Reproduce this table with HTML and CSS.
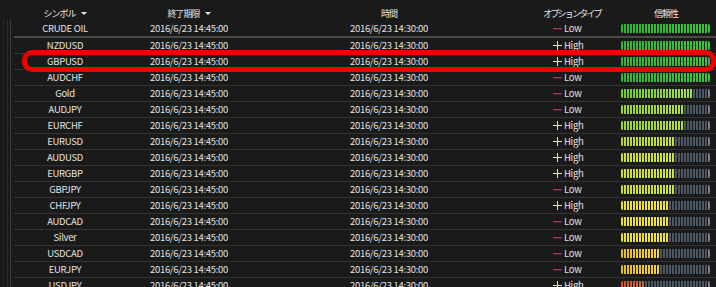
FILE: index.html
```html
<!DOCTYPE html>
<html lang="ja">
<head>
<meta charset="utf-8">
<title>信頼性</title>
<link rel="stylesheet" href="styles.css">
</head>
<body>
<div class="screen">
  <div class="rails"></div>
  <div class="table">
    <div class="head">
      <div class="hc">シンボル<span class="sort"></span></div>
      <div class="hc">終了期限<span class="sort"></span></div>
      <div class="hc">時間</div>
      <div class="hc hc-type">オプションタイプ</div>
      <div class="hc">信頼性</div>
    </div>

    <div class="row row-first"><div class="c">CRUDE OIL</div><div class="c">2016/6/23 14:45:00</div><div class="c">2016/6/23 14:30:00</div><div class="t"><span class="ico low"></span>Low</div><div class="b"><div class="bar"><div class="fill lv1" style="width:90px"></div></div></div></div>
    <div class="row"><div class="c">NZDUSD</div><div class="c">2016/6/23 14:45:00</div><div class="c">2016/6/23 14:30:00</div><div class="t"><span class="ico high"></span>High</div><div class="b"><div class="bar"><div class="fill lv1" style="width:90px"></div></div></div></div>
    <div class="row"><div class="c">GBPUSD</div><div class="c">2016/6/23 14:45:00</div><div class="c">2016/6/23 14:30:00</div><div class="t"><span class="ico high"></span>High</div><div class="b"><div class="bar"><div class="fill lv1" style="width:87px"></div></div></div></div>
    <div class="row"><div class="c">AUDCHF</div><div class="c">2016/6/23 14:45:00</div><div class="c">2016/6/23 14:30:00</div><div class="t"><span class="ico low"></span>Low</div><div class="b"><div class="bar"><div class="fill lv1" style="width:90px"></div></div></div></div>
    <div class="row"><div class="c">Gold</div><div class="c">2016/6/23 14:45:00</div><div class="c">2016/6/23 14:30:00</div><div class="t"><span class="ico low"></span>Low</div><div class="b"><div class="bar"><div class="fill lv2" style="width:72px"></div></div></div></div>
    <div class="row"><div class="c">AUDJPY</div><div class="c">2016/6/23 14:45:00</div><div class="c">2016/6/23 14:30:00</div><div class="t"><span class="ico low"></span>Low</div><div class="b"><div class="bar"><div class="fill lv3" style="width:63px"></div></div></div></div>
    <div class="row"><div class="c">EURCHF</div><div class="c">2016/6/23 14:45:00</div><div class="c">2016/6/23 14:30:00</div><div class="t"><span class="ico high"></span>High</div><div class="b"><div class="bar"><div class="fill lv3" style="width:63px"></div></div></div></div>
    <div class="row"><div class="c">EURUSD</div><div class="c">2016/6/23 14:45:00</div><div class="c">2016/6/23 14:30:00</div><div class="t"><span class="ico high"></span>High</div><div class="b"><div class="bar"><div class="fill lv4" style="width:54px"></div></div></div></div>
    <div class="row"><div class="c">AUDUSD</div><div class="c">2016/6/23 14:45:00</div><div class="c">2016/6/23 14:30:00</div><div class="t"><span class="ico high"></span>High</div><div class="b"><div class="bar"><div class="fill lv5" style="width:54px"></div></div></div></div>
    <div class="row"><div class="c">EURGBP</div><div class="c">2016/6/23 14:45:00</div><div class="c">2016/6/23 14:30:00</div><div class="t"><span class="ico high"></span>High</div><div class="b"><div class="bar"><div class="fill lv5" style="width:54px"></div></div></div></div>
    <div class="row"><div class="c">GBPJPY</div><div class="c">2016/6/23 14:45:00</div><div class="c">2016/6/23 14:30:00</div><div class="t"><span class="ico low"></span>Low</div><div class="b"><div class="bar"><div class="fill lv5" style="width:54px"></div></div></div></div>
    <div class="row"><div class="c">CHFJPY</div><div class="c">2016/6/23 14:45:00</div><div class="c">2016/6/23 14:30:00</div><div class="t"><span class="ico high"></span>High</div><div class="b"><div class="bar"><div class="fill lv6" style="width:48px"></div></div></div></div>
    <div class="row"><div class="c">AUDCAD</div><div class="c">2016/6/23 14:45:00</div><div class="c">2016/6/23 14:30:00</div><div class="t"><span class="ico low"></span>Low</div><div class="b"><div class="bar"><div class="fill lv6" style="width:48px"></div></div></div></div>
    <div class="row"><div class="c">Silver</div><div class="c">2016/6/23 14:45:00</div><div class="c">2016/6/23 14:30:00</div><div class="t"><span class="ico low"></span>Low</div><div class="b"><div class="bar"><div class="fill lv6" style="width:48px"></div></div></div></div>
    <div class="row"><div class="c">USDCAD</div><div class="c">2016/6/23 14:45:00</div><div class="c">2016/6/23 14:30:00</div><div class="t"><span class="ico low"></span>Low</div><div class="b"><div class="bar"><div class="fill lv7" style="width:39px"></div></div></div></div>
    <div class="row"><div class="c">EURJPY</div><div class="c">2016/6/23 14:45:00</div><div class="c">2016/6/23 14:30:00</div><div class="t"><span class="ico low"></span>Low</div><div class="b"><div class="bar"><div class="fill lv7" style="width:39px"></div></div></div></div>
    <div class="row"><div class="c">USDJPY</div><div class="c">2016/6/23 14:45:00</div><div class="c">2016/6/23 14:30:00</div><div class="t"><span class="ico high"></span>High</div><div class="b"><div class="bar"><div class="fill lv8" style="width:24px"></div></div></div></div>
  </div>
  <div class="focus"></div>
</div>
</body>
</html>
```

FILE: styles.css
```css
html, body {
  margin: 0;
  padding: 0;
  background: #1a1a1a;
}

.screen {
  position: relative;
  display: flex;
  align-items: flex-start;
  width: 716px;
  height: 287px;
  overflow: hidden;
  background: #1a1a1a;
  font-family: "Noto Sans CJK JP", "Noto Sans", sans-serif;
  font-size: 9.5px;
  letter-spacing: -0.3px;
  color: #e2e2e2;
}

.rails {
  flex: none;
  align-self: stretch;
  width: 14px;
  margin-top: 19px;
  background: linear-gradient(to right,
    transparent 0 3px, #262626 3px 4px,
    transparent 4px 7px, #2b2b2b 7px 8px,
    transparent 8px 10px, #3c3c3c 10px 11px,
    transparent 11px);
}

.table {
  flex: 1;
  display: flex;
  flex-direction: column;
}

.head,
.row {
  flex: none;
  display: grid;
  grid-template-columns: 102px 146px 254px 100px 100px;
}

.head {
  height: 21px;
  box-sizing: border-box;
  padding-top: 6px;
}

.hc {
  display: flex;
  justify-content: center;
  align-items: center;
  height: 14px;
  font-size: 9px;
  letter-spacing: -1px;
  color: #e8e8e8;
}

.hc-type {
  padding-left: 12px;
  letter-spacing: -1.8px;
}

.sort {
  width: 0;
  height: 0;
  margin-left: 5px;
  border-left: 3px solid transparent;
  border-right: 3px solid transparent;
  border-top: 3px solid #e8e8e8;
}

.row {
  height: 16px;
  box-sizing: border-box;
  border-bottom: 1px solid #343434;
  align-items: center;
}

.row-first {
  border-bottom: 2px solid #4a4a4a;
  height: 17px;
}

.c {
  text-align: center;
  white-space: nowrap;
  line-height: 15px;
}

.t {
  display: flex;
  align-items: center;
  padding-left: 37px;
  line-height: 15px;
}

.ico {
  position: relative;
  width: 10px;
  height: 9px;
  margin-right: 1px;
}

.ico.low::before {
  content: "";
  position: absolute;
  left: 0;
  right: 1px;
  top: 4px;
  height: 1px;
  background: #b03a4a;
  box-shadow: 0 0.5px 0 #7a2530;
}

.ico.high::before,
.ico.high::after {
  content: "";
  position: absolute;
  background: #ece4a8;
}

.ico.high::before {
  left: 0;
  right: 1px;
  top: 4px;
  height: 1px;
}

.ico.high::after {
  left: 4px;
  width: 1px;
  top: 0;
  bottom: 0;
}

.b {
  display: flex;
  align-items: center;
  padding-left: 5px;
}

.bar {
  position: relative;
  width: 89px;
  height: 9px;
  border-radius: 2px;
  overflow: hidden;
  background: linear-gradient(to right, #4c5766 0 87px, #7d7f84 87px);
}

.bar::after {
  content: "";
  position: absolute;
  inset: 0;
  background: repeating-linear-gradient(to right,
    transparent 0 2px, #1a1a1a 2px 3px);
}

.fill {
  height: 100%;
}

.lv1 { background: linear-gradient(to right, #34b534, #3cc23c); }
.lv2 { background: linear-gradient(to right, #6fcb2e, #a6dc5a); }
.lv3 { background: linear-gradient(to right, #96d434, #b4dc46); }
.lv4 { background: linear-gradient(to right, #b2d838, #c4e040); }
.lv5 { background: linear-gradient(to right, #d0dc3a, #c8e04a); }
.lv6 { background: linear-gradient(to right, #e8e03a, #eee24a); }
.lv7 { background: linear-gradient(to right, #e8b830, #f0d048); }
.lv8 { background: linear-gradient(to right, #d4502c, #c86a3a); }

.focus {
  position: absolute;
  left: 22px;
  top: 50px;
  width: 694px;
  height: 22px;
  box-sizing: border-box;
  border: 5px solid #ee0000;
  border-radius: 10px;
}
```
